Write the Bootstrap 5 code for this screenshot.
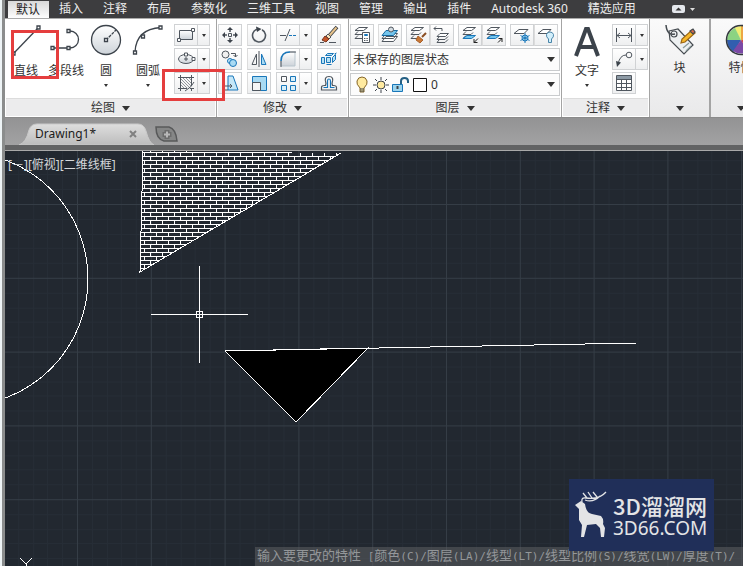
<!DOCTYPE html>
<html lang="zh-CN">
<head>
<meta charset="utf-8">
<meta name="viewport" content="width=device-width, initial-scale=1">
<title>Drawing1*</title>
<link rel="stylesheet" href="https://cdn.jsdelivr.net/npm/bootstrap@5.3.0/dist/css/bootstrap.min.css">
<style>
body{font:12px/18px "Noto Sans","Noto Sans CJK SC",sans-serif;color:#303338;background:#222830;border-left:2px solid #eef4f6}
.app{border-left:3px solid #8b8d8d}
.menubar{background:#3d3d3f;height:18px;margin-left:-3px;padding-left:6px}
.menubar a{color:#eee;text-decoration:none;padding:0 10px;height:18px}
.menubar a.current{background:linear-gradient(#d8d8d8,#fff);color:#222;padding:0 9px 0 8px;margin-top:1px;line-height:17px}
.ribbon{height:100px;background:#fff;border-bottom:1px solid #8a8a8a;border-top:1px solid #aaa}
.panel{border-right:1px solid #a4a4a4;padding:0 1px;position:relative}
.panel-draw{width:212px}.panel-mod{width:132px}.panel-layer{width:213px}.panel-note{width:88px}
.panel-fold{width:61px;background:linear-gradient(#fafafa,#e9e9ea);border-right:2px solid #a4a4a4}
.panel-body{height:79px;padding-top:5px}
.panel-name{height:18px;background:#ececed;border:0;border-top:1px solid #dcdcdc;padding:0;width:100%;color:#333}
.tri{display:inline-block;border:4px solid transparent;border-top:5px solid #333;border-bottom:0}
.tri-s{border-width:3px 2px 0;border-top-width:3px}
.big{width:40px;border:0;background:none;padding:0;color:#333;white-space:nowrap}
.big-wide{width:44px}
.g2{gap:2px}.g4{gap:4px}.g5{gap:5px}
.tool{height:22px;border:1px solid #d0d2d4;background:linear-gradient(#fff,#eeeff0);padding:0;width:24px;display:flex;align-items:center;justify-content:center}
.tool + .tool{border-left-color:#dcdcdc}
.drop{width:12px;border-left:0}
.fold-tri{margin-top:auto;margin-bottom:6px}
svg{display:block;flex:none}
.ic{width:20px;height:20px;fill:none;stroke:#50575f;stroke-width:1}
.combo{height:23px;border:1px solid #c9cbcd;background:#fcfcfc;position:relative}
.combo select{appearance:none;border:0;background:none;width:100%;height:100%;padding:0 2px;color:#333;outline-offset:-1px}
.combo .tri{position:absolute;right:4px;top:8px;pointer-events:none}
.marker{position:absolute;border:3px solid #e53e3e;pointer-events:none;z-index:2}
.mark-line{left:6px;top:11px;width:48px;height:49px}
.mark-hatch{left:157px;top:50px;width:63px;height:32px}
.filetabs{height:27px;background:linear-gradient(#939394,#a2a2a3)}
.filetab{position:relative;width:132px;height:22px;margin:5px 0 0 14px}
.filetab .shape{position:absolute;inset:0}
.filetab .inner{position:relative;padding:0 10px 0 16px;height:22px;color:#1c1c1c}
.tabclose{border:0;background:none;padding:0}
.strip{height:6px;background:#626364;border-bottom:1px solid #a9a9a9}
.drawing{background:#222830;position:relative;min-height:0}
.viewlabel{position:absolute;left:3px;top:5px;color:#d5d8da}
.brand{position:absolute;right:29px;bottom:15px;width:145px;height:72px;background:#202f59;color:#e3e4e6;padding-left:4px}
.brand-a{font:500 22px/26px "Noto Sans CJK SC",sans-serif}
.brand-b{font:19px/20px "Noto Sans",sans-serif}
.cmd{position:absolute;left:250px;right:0;bottom:0;height:19px;background:rgba(92,94,98,.55);color:#94979a;font:13px/16px "Noto Sans CJK SC",sans-serif;padding-left:2px;white-space:nowrap;overflow:hidden}
.cmd code{font:11px/15px "DejaVu Sans Mono",monospace;color:inherit;white-space:pre}
</style>
<script src="https://cdn.jsdelivr.net/npm/bootstrap@5.3.0/dist/js/bootstrap.bundle.min.js"></script>
</head>
<body>
<div class="app d-flex flex-column vh-100 overflow-hidden">
<nav class="menubar d-flex flex-shrink-0 text-nowrap">
<a class="current" href="#">默认</a><a href="#">插入</a><a href="#">注释</a><a href="#">布局</a><a href="#">参数化</a><a href="#">三维工具</a><a href="#">视图</a><a href="#">管理</a><a href="#">输出</a><a href="#">插件</a><a href="#">Autodesk 360</a><a href="#">精选应用</a>
<a href="#" aria-label="最小化功能区" class="ms-3 d-flex align-items-center"><svg width="26" height="10"><rect y="1" width="13" height="8" rx="2" fill="#e4e7ec"/><path d="M3.500 6.500l3-3 3 3z" fill="#333"/><path d="M18 4h5l-2.500 3z" fill="#ddd"/></svg></a>
</nav>

<div class="ribbon position-relative d-flex flex-shrink-0 overflow-hidden">
<section class="panel panel-draw flex-shrink-0">
 <div class="panel-body d-flex">
  <button class="big d-flex flex-column align-items-center"><svg width="32" height="38" fill="none" stroke="#3c434b" stroke-width="1.300"><path d="M4 29L28 4"/><g fill="#fff"><path d="M27 2h3v3h-3zM2 28h3v3h-3z"/></g></svg><span>直线</span></button>
  <button class="big d-flex flex-column align-items-center"><svg width="32" height="38" fill="none" stroke="#3c434b" stroke-width="1.300"><path d="M3 24H20a8.500 8.500 0 0 0 0-17h-1"/><g fill="#fff"><path d="M1 22.500h3v3H1zM17 22.500h3v3h-3zM17 5.500h3v3h-3z"/></g></svg><span>多段线</span></button>
  <button class="big d-flex flex-column align-items-center"><svg width="32" height="38" fill="none" stroke="#3c434b" stroke-width="1.300"><defs><linearGradient id="g" x2="0" y2="1"><stop stop-color="#fff"/><stop offset="1" stop-color="#cdd3d9"/></linearGradient></defs><circle cx="16" cy="16" r="14.500" fill="url(#g)"/><path d="M16 16L26 6" stroke-dasharray="3 1"/><path fill="#fff" d="M14.500 14.500h3v3h-3z"/></svg><span>圆</span><i class="tri tri-s mt-1"></i></button>
  <button class="big big-wide d-flex flex-column align-items-center"><svg width="32" height="38" fill="none" stroke="#3c434b" stroke-width="1.300"><path d="M3 28Q4 5 29 3.500"/><g fill="#fff"><path d="M1.500 27h3v3h-3zM9.500 11h3v3h-3zM27 2h3v3h-3z"/></g></svg><span>圆弧</span><i class="tri tri-s mt-1"></i></button>
  <div class="d-flex flex-column g2 ps-1">
   <div class="d-flex"><button class="tool" aria-label="矩形"><svg class="ic" viewBox="0 0 20 20"><path d="M3.500 5.500h13v9h-13z" fill="url(#g)"/><path fill="#fff" d="M15.500 3.500h3v3h-3zM1.500 13.500h3v3h-3z"/></svg></button><button class="tool drop" aria-label="更多"><i class="tri tri-s"></i></button></div>
   <div class="d-flex"><button class="tool" aria-label="椭圆"><svg class="ic" viewBox="0 0 20 20"><ellipse cx="10" cy="10" rx="7.500" ry="4.500" fill="url(#g)"/><path d="M10 8v4M8 10h4"/><path fill="#fff" d="M8.500 4h3v3h-3zM16 8.500h3v3h-3z"/></svg></button><button class="tool drop" aria-label="更多"><i class="tri tri-s"></i></button></div>
   <div class="d-flex"><button class="tool" aria-label="图案填充"><svg class="ic" viewBox="0 0 20 20"><path d="M4.500 2v16M15.500 2v11M15.500 15v3M2 4.500h16M2 15.500h9M14 15.500h4M18 9Q16 14 9 18"/><path d="M5 12l3 3M5 9l6 6M5 6l9 9M7 5l8 8M10 5l5 5M13 5l2 2" stroke-width=".6"/></svg></button><button class="tool drop" aria-label="更多"><i class="tri tri-s"></i></button></div>
  </div>
 </div>
 <button class="panel-name">绘图 <i class="tri ms-1 align-middle"></i></button>
</section>

<section class="panel panel-mod flex-shrink-0">
 <div class="panel-body d-flex flex-column g2">
  <div class="d-flex g5">
   <button class="tool" aria-label="移动"><svg class="ic" viewBox="0 0 20 20"><path d="M10 3v4M10 13v4M3 10h4M13 10h4" stroke-width="1.600"/><path d="M8.500 8.500h3v3h-3z"/><path d="M10 2l3 3H7zM10 18l3-3H7zM2 10l3-3v6zM18 10l-3-3v6z" fill="#3c434b" stroke="none"/></svg></button>
   <button class="tool" aria-label="旋转"><svg class="ic" viewBox="0 0 20 20"><path d="M8 4.300A6.500 6.500 0 1 0 13 4.700" stroke-width="1.600"/><path d="M7 1.500l5.500 2.500L8 7z" fill="#3c434b" stroke="none"/></svg></button>
   <div class="d-flex"><button class="tool" aria-label="修剪"><svg class="ic" viewBox="0 0 20 20"><path d="M2 10.500h6M12 4L7 16"/><path d="M11 10.500h8" stroke="#1976b9" stroke-dasharray="3 1"/></svg></button><button class="tool drop" aria-label="更多"><i class="tri tri-s"></i></button></div>
   <button class="tool" aria-label="删除"><svg class="ic" viewBox="0 0 20 20"><path d="M18 2l-8 9" stroke="#353b41" stroke-width="3.600"/><path d="M17.500 2.500l-7 8" stroke="#e7c38c" stroke-width="2"/><path d="M9 9l3 3-2 2-3-3z" fill="#f8e5bc"/><path d="M6 11l4 3-3 3-4-2z" fill="#c4562a" stroke="#77331d"/><path d="M1 17.500h4M10 17.500h7"/></svg></button>
  </div>
  <div class="d-flex g5">
   <button class="tool" aria-label="复制"><svg class="ic" viewBox="0 0 20 20"><circle cx="5.500" cy="5.500" r="3.500" fill="#f1f1f1"/><path d="M11 4.500h4.500V8M13.500 6l2 2 2-2"/><circle cx="10" cy="12" r="2.500" fill="#c5e7f8" stroke="#1976b9"/><circle cx="13" cy="14" r="3.500" fill="#a8daf3" stroke="#1976b9"/></svg></button>
   <button class="tool" aria-label="镜像"><svg class="ic" viewBox="0 0 20 20"><path d="M7.500 5v10.500H3zM10 2v16"/><path d="M12.500 5v10.500H17z" fill="#a8daf3" stroke="#1976b9"/></svg></button>
   <div class="d-flex"><button class="tool" aria-label="圆角"><svg class="ic" viewBox="0 0 20 20"><path d="M3 17V12Q3 3 12 3h5v14z" fill="url(#g)" stroke="#b8c5cd"/><path d="M3 12Q3 3 12 3" stroke="#1976b9" stroke-width="1.500"/><path d="M3 12v6M12 3h6"/></svg></button><button class="tool drop" aria-label="更多"><i class="tri tri-s"></i></button></div>
   <button class="tool" aria-label="分解"><svg class="ic" viewBox="0 0 20 20"><g stroke="#1976b9" fill="#b6e1f5"><path d="M6.500 6.500l2-2h6l-2 2zM2.500 8.500h3v6h-3zM7.500 8.500h4v5h-4zM13.500 8.500l3-3v5l-3 3zM15.500 5l2-1M7.500 15.500h5"/></g></svg></button>
  </div>
  <div class="d-flex g5">
   <button class="tool" aria-label="拉伸"><svg class="ic" viewBox="0 0 20 20"><path d="M8 3h5l5 14H8z" fill="#c5e7f8" stroke="#1976b9"/><path d="M3 3v14h5M5 13h7M10 11l2 2-2 2"/></svg></button>
   <button class="tool" aria-label="缩放"><svg class="ic" viewBox="0 0 20 20"><path d="M3.500 3.500h14v14h-14z" fill="#a8daf3" stroke="#1976b9"/><path d="M3.500 9.500h8v8h-8z" fill="#f5f5f5"/></svg></button>
   <div class="d-flex"><button class="tool" aria-label="阵列"><svg class="ic" viewBox="0 0 20 20"><path d="M3.500 3.500h5v5h-5z"/><path d="M12.500 3.500h5v5h-5zM3.500 12.500h5v5h-5zM12.500 12.500h5v5h-5z" fill="#d7effa" stroke="#1976b9"/></svg></button><button class="tool drop" aria-label="更多"><i class="tri tri-s"></i></button></div>
   <button class="tool" aria-label="偏移"><svg class="ic" viewBox="0 0 20 20"><path d="M2.500 17h15v-2.500q0-2-3-2h-1l-.5-2q2.500-7-3-7t-3 7l-.5 2h-1q-3 0-3 2z" stroke-width="1.200"/><path d="M4.500 14.500h4V8q0-2 1.500-2t1.500 2v6.500h4" stroke="#1976b9" stroke-width="1.200"/></svg></button>
  </div>
 </div>
 <button class="panel-name">修改 <i class="tri ms-1 align-middle"></i></button>
</section>

<section class="panel panel-layer flex-shrink-0">
 <svg width="0" height="0" class="position-absolute"><defs><g id="st"><path d="M7 2.500h8.500l-4 3H3z" fill="#fff"/><path d="M6 6.500L3 9.500h8l2-2M6 10.500l-3 3h7"/></g></defs></svg>
 <div class="panel-body d-flex flex-column g2">
  <div class="d-flex g4">
   <button class="tool" aria-label="图层特性"><svg class="ic" viewBox="0 0 20 20"><use href="#st"/><path d="M10.500 7.500h7v10h-7z" fill="#fff"/><path d="M12.500 9.500h3v1h-3z" stroke="#1976b9"/><path d="M12 13.500h4M12 15.500h4" stroke-dasharray="1 .6"/></svg></button>
   <button class="tool" aria-label="置为当前"><svg class="ic" viewBox="0 0 20 20"><path d="M6 11.500h11.500l-4 5H2zM6 8.500h11.500l-4 5H2z" fill="#fff"/><path d="M6 5.500h11.500l-4 5H2z" fill="#73c5ed" stroke="#176aa1"/><circle cx="11" cy="4.500" r="2.500" fill="#d4dce2"/></svg></button>
   <div class="d-flex"><button class="tool" aria-label="匹配图层"><svg class="ic" viewBox="0 0 20 20"><use href="#st"/><path d="M18 8l-4 4" stroke="#8a4e22" stroke-width="2"/><path d="M10 11l5 4-3 3-4-3z" fill="#c97735" stroke="#a8612b"/></svg></button><button class="tool" aria-label="上一个"><svg class="ic" viewBox="0 0 20 20"><path d="M8 8.500h8.500l-3 3H5z" fill="#fff"/><path d="M7 12l-2 2.500h8l3-3M7 15l-2 2.500h8l3-3M2 3.500h8V6M4 1.500l-2 2 2 2"/></svg></button></div>
   <div class="d-flex"><button class="tool" aria-label="隔离"><svg class="ic" viewBox="0 0 20 20"><use href="#st"/><path d="M7 10.500h8.500l-4 3H3z" fill="#73c5ed" stroke="#1976b9"/><path d="M18 13.500l-4 4M14 14v3.500h3.500" stroke="#222"/></svg></button><button class="tool" aria-label="取消隔离"><svg class="ic" viewBox="0 0 20 20"><use href="#st"/><path d="M7 10.500h8.500l-4 3H3z" fill="#73c5ed" stroke="#1976b9"/><path d="M14 17.500l4-4M14.500 13.500H18V17" stroke="#222"/></svg></button></div>
   <div class="d-flex"><button class="tool" aria-label="冻结"><svg class="ic" viewBox="0 0 20 20"><path d="M7 4.500h9l-4 4H2z" fill="#fff"/><g stroke="#1976b9"><circle cx="13" cy="13" r="3" fill="#bce5f7"/><path d="M13 8v10M8.500 10.500l9 5M17.500 10.500l-9 5"/></g></svg></button><button class="tool" aria-label="关闭"><svg class="ic" viewBox="0 0 20 20"><path d="M7 4.500h8l-4 4H2z" fill="#fff"/><path d="M12.500 14q-2.500-2-2-4.500.8-2.500 3.500-2.500t3.500 2.500q.5 2.500-2 4.500v3.500h-3z" fill="#d3effb" stroke="#4986aa"/></svg></button></div>
  </div>
  <div class="combo"><select aria-label="图层状态"><option>未保存的图层状态</option></select><i class="tri"></i></div>
  <div class="combo d-flex align-items-center ps-1">
   <svg width="74" height="20" fill="none" stroke="#3c434b"><path d="M5 13Q1 9 2 6q1-4 5-4t5 4q1 3-3 7v4H5z" fill="#ffeaa0" stroke="#84662b"/><path d="M5 14h4M5 16h4"/><circle cx="26" cy="10" r="4" fill="#ffeaa0"/><path d="M26 2v3M26 15v3M18 10h3M31 10h3M20 4l2 2M30 14l2 2M32 4l-2 2M22 14l-2 2"/><path d="M46 10V6q0-3 3.500-3T53 6v2" stroke="#245f83" stroke-width="2"/><path d="M37.500 9.500h10v7h-10z" fill="#9dd5ee" stroke="#1976b9"/><path d="M42.500 11v3" stroke-width="2"/><path d="M58.500 3.500h13v13h-13z" fill="#fff" stroke="#111"/></svg>
   <select aria-label="当前图层"><option>0</option></select><i class="tri"></i></div>
 </div>
 <button class="panel-name">图层 <i class="tri ms-1 align-middle"></i></button>
</section>

<section class="panel panel-note flex-shrink-0">
 <div class="panel-body d-flex justify-content-between ps-1">
  <button class="big d-flex flex-column align-items-center"><svg width="28" height="38" fill="none" stroke="#3c434b" stroke-width="4"><path d="M3 32L13 5h2l10 27M7 23h14"/></svg><span>文字</span><i class="tri tri-s mt-1"></i></button>
  <div class="d-flex flex-column g2">
   <div class="d-flex"><button class="tool" aria-label="线性标注"><svg class="ic" viewBox="0 0 20 20"><path d="M2.500 3v14M17.500 3v14M3 10.500h14M6 8l-3 2.500L6 13M14 8l3 2.500-3 2.500"/></svg></button><button class="tool drop" aria-label="更多"><i class="tri tri-s"></i></button></div>
   <div class="d-flex"><button class="tool" aria-label="引线"><svg class="ic" viewBox="0 0 20 20"><circle cx="15" cy="6" r="2.800"/><path d="M12 6q-6 0-8 9"/><path d="M2 12l5 1.500L3 18z" fill="#3c434b" stroke="none"/></svg></button><button class="tool drop" aria-label="更多"><i class="tri tri-s"></i></button></div>
   <button class="tool" aria-label="表格"><svg class="ic" viewBox="0 0 20 20"><path d="M2.500 2.500h15v15h-15z" fill="#fff"/><path d="M3 3h14v3H3z" fill="#8d9aa5" stroke="none"/><path d="M3 6.500h14M3 10.500h14M3 14.500h14M7.500 7v10M12.500 7v10"/></svg></button>
  </div>
 </div>
 <button class="panel-name">注释 <i class="tri ms-1 align-middle"></i></button>
</section>

<section class="panel panel-fold flex-shrink-0">
 <button class="big w-100 h-100 d-flex flex-column align-items-center"><svg class="mt-1" width="34" height="36" fill="none" stroke="#454b50" stroke-width="1.200"><path d="M6 8l9-2 15 16-9 9L7 17z" fill="#edf0f1"/><circle cx="11" cy="11" r="3"/><path d="M12 11Q4 13 3 2" stroke-width="1.500"/><path d="M20 25l6-5M23 28l5-5" stroke="#899"/><path d="M18 20l1-4L29 7l3 3-10 9z" fill="#f6b72b" stroke="#9c6714"/><path d="M27 8l3-2 2 3-2 2z" fill="#d96a4b"/></svg><span>块</span><i class="tri fold-tri"></i></button>
</section>
<section class="panel panel-fold flex-shrink-0">
 <button class="big w-100 h-100 d-flex flex-column align-items-center"><svg class="mt-1" width="34" height="36" viewBox="-17 -17 34 36" stroke="none"><path d="M0 0L-7-12A14 14 0 0 1 7-12z" fill="#f2ed75"/><path d="M0 0V-14A14 14 0 0 1 14 0z" fill="#eda745"/><path d="M0 0L-14 0A14 14 0 0 1-6-12z" fill="#8bd382"/><path d="M0 0H-14A14 14 0 0 0-7 12z" fill="#315eaf"/><path d="M0 0L-8 11A14 14 0 0 0 8 11z" fill="#7b49a6"/><path d="M0 0H14A14 14 0 0 1 7 12z" fill="#ce4a50"/><circle r="14.500" fill="none" stroke="#33383e" stroke-width="1.500"/></svg><span>特性</span><i class="tri fold-tri"></i></button>
</section>
<span class="marker mark-line"></span><span class="marker mark-hatch"></span>
</div>

<div class="filetabs d-flex flex-shrink-0">
 <div class="filetab"><svg class="shape" width="140" height="22"><defs><linearGradient id="t" x2="0" y2="1"><stop stop-color="#dedede"/><stop offset="1" stop-color="#bcbcbc"/></linearGradient></defs><path d="M0 22Q7 20 10 7Q12 1 18 1H119Q125 1 127 8Q130 20 135 22z" fill="url(#t)" stroke="#c9c9c9"/></svg>
 <div class="inner d-flex align-items-center justify-content-between"><span>Drawing1*</span><button class="tabclose me-1" aria-label="关闭"><svg width="8" height="8" stroke="#808080" stroke-width="2"><path d="M1 1l6 6M7 1L1 7"/></svg></button></div></div>
 <button class="tabclose ms-1 mt-1" aria-label="新建"><svg width="24" height="18" fill="none" stroke="#58595a" stroke-width="1.500"><path d="M1 2h13q7 2 8 14H9Q1 14 1 2z" fill="#858686"/><path d="M12 5v9M7.500 9.500h9" stroke="#6c6c6c" stroke-width="5"/><path d="M12 6.500v6M9 9.500h6" stroke="#b8b8b8" stroke-width="2"/></svg></button>
</div>
<div class="strip flex-shrink-0"></div>

<main class="drawing flex-grow-1 overflow-hidden">
<svg width="100%" height="100%" fill="none" shape-rendering="crispEdges">
<defs>
<pattern id="grid" x="72" y="53" width="73.800" height="73.800" patternUnits="userSpaceOnUse"><path d="M15.300 0v74M30 0v74M44.800 0v74M59.500 0v74M0 15.300h74M0 30h74M0 44.800h74M0 59.500h74" stroke="#262d36"/><path d="M.5 0v74M0 .5h74" stroke="#353d46"/></pattern>
<pattern id="brick" x="7" y="1" width="12" height="8" patternUnits="userSpaceOnUse"><path d="M0 .5h12M0 4.500h12M.5 0v4M6.500 4v4" stroke="#fff"/></pattern>
</defs>
<rect width="100%" height="100%" fill="url(#grid)"/>
<path d="M138 0L336 2L135 121z" fill="url(#brick)"/>
<g stroke="#fff"><path d="M138 0L135 121L336 2"/><circle cx="-44" cy="128" r="127"/>
<path d="M220 200L291 271L363 197z" fill="#000"/><path d="M220 200L632 192"/>
<path d="M194.500 115v97M146 163.500h97M191.500 160.500h6v6h-6zM15 407l6 6 6-6M21.500 413v8"/></g>
</svg>
<div class="viewlabel">[－][俯视][二维线框]</div>
<div class="cmd">输入要更改的特性<code> [</code>颜色<code>(C)/</code>图层<code>(LA)/</code>线型<code>(LT)/</code>线型比例<code>(S)/</code>线宽<code>(LW)/</code>厚度<code>(T)/</code><br>明度<code>(TR)/</code>材质<code>(M)/</code>注释性<code>(A)]:</code></div>
<div class="brand d-flex align-items-center"><svg width="36" height="48" fill="#e3e4e6" stroke="#e3e4e6"><path d="M2 14l6-4 4 3q1 9 7 10l9 2q3 3 2 8l2 4-1 9h-3l-1-9-4-4-9 1-3 12h-3l1-12-3-5V18z" stroke="none"/><path d="M9 11q-1-5 4-4 13 2 20-6M14 7l-4-5M19 7l-4-6M24 6l-4-5M12 9q8 3 15-4" fill="none" stroke-width="1.300"/></svg><div class="ps-1 text-nowrap"><div class="brand-a">3D溜溜网</div><div class="brand-b">3D66.COM</div></div></div>
</main>
</div>
</body>
</html>
